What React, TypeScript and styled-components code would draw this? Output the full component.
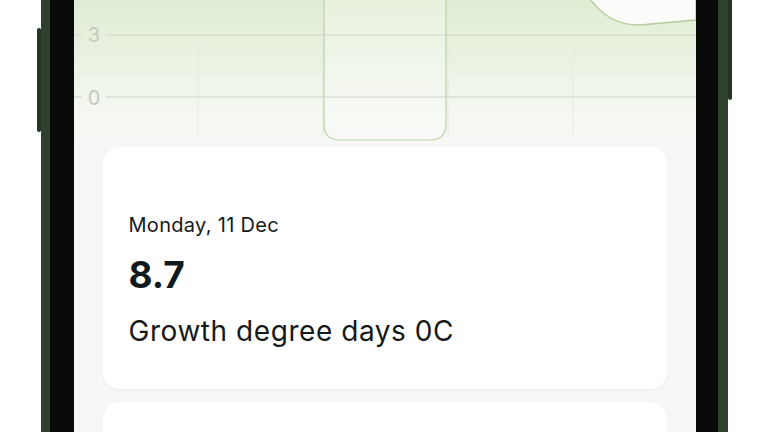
import * as React from "react";
import styled, { createGlobalStyle } from "styled-components";

const GlobalStyle = createGlobalStyle`
  html, body {
    margin: 0;
    padding: 0;
    background: #ffffff;
  }
  body {
    font-family: Inter, "Noto Sans", "Liberation Sans", sans-serif;
  }
`;

const Viewport = styled.div`
  width: 768px;
  height: 432px;
  overflow: hidden;
  display: flex;
  justify-content: center;
  background: #ffffff;
`;

const Phone = styled.div`
  position: relative;
  width: 687px;
  height: 432px;
  box-sizing: border-box;
  border-left: 9px solid #2e412d;
  border-right: 10px solid #2e412d;
  box-shadow: inset 1px 0 0 #3d543a, inset -1px 0 0 #3d543a;
`;

const SideButton = styled.div<{ $side: "left" | "right"; $top: number; $height: number }>`
  position: absolute;
  top: ${(p) => p.$top}px;
  height: ${(p) => p.$height}px;
  width: 4px;
  ${(p) => (p.$side === "left" ? "left: -13px;" : "right: -14px;")}
  background: #253622;
  border-radius: 2px;
`;

const Bezel = styled.div`
  height: 100%;
  box-sizing: border-box;
  border-left: 24px solid #0a0a0a;
  border-right: 22px solid #0a0a0a;
`;

const Screen = styled.div`
  height: 100%;
  background: #f7f7f5;
  display: flex;
  flex-direction: column;
  overflow: hidden;
`;

const Chart = styled.div`
  height: 145px;
  flex-shrink: 0;
  background: linear-gradient(180deg, #e0edd3 0%, #ebf3e4 45%, #f5f8f2 80%, #f7f7f5 100%);
  svg {
    display: block;
  }
`;

const CardList = styled.div`
  display: flex;
  flex-direction: column;
  gap: 13px;
  padding: 2px 29px 0 29px;
`;

const Card = styled.div<{ $tall?: boolean }>`
  background: #ffffff;
  border-radius: 16px;
  box-shadow: 0 1px 3px rgba(0, 0, 0, 0.05);
  padding: 66px 26px 41px;
  display: flex;
  flex-direction: column;
  min-height: ${(p) => (p.$tall ? "200px" : "0")};
`;

const DateLabel = styled.div`
  font-size: 20px;
  line-height: 24px;
  letter-spacing: 0.3px;
  color: #16191a;
`;

const Value = styled.div`
  margin-top: 15px;
  font-size: 37px;
  line-height: 46px;
  font-weight: 700;
  color: #0e1a1c;
`;

const Metric = styled.div`
  margin-top: 16px;
  font-size: 28px;
  line-height: 34px;
  letter-spacing: 0.55px;
  color: #16191a;
`;

function ChartArt() {
  const gridColor = "#cfd4ca";
  return (
    <svg width="622" height="145" viewBox="0 0 622 145">
      {[124, 249, 374, 499].map((x) => (
        <line key={x} x1={x} y1={0} x2={x} y2={135} stroke="#e3ecdb" strokeWidth="1" />
      ))}
      <path
        d="M250 -20 L250 124 Q250 140 266 140 L356 140 Q372 140 372 124 L372 -20"
        fill="rgba(255,255,255,0.25)"
        stroke="#bcd3a5"
        strokeWidth="1.2"
      />
      {[35, 97].map((y) => (
        <g key={y}>
          <line x1={0} y1={y} x2={8} y2={y} stroke={gridColor} strokeWidth="1" />
          <line x1={32} y1={y} x2={622} y2={y} stroke={gridColor} strokeWidth="1" />
        </g>
      ))}
      <text x="20" y="42" textAnchor="middle" fontSize="20" fill="#c6c9c3" fontFamily="Inter, sans-serif">
        3
      </text>
      <text x="20" y="105" textAnchor="middle" fontSize="20" fill="#c6c9c3" fontFamily="Inter, sans-serif">
        0
      </text>
      <path
        d="M515 -2 C528 14, 540 25, 566 25 L622 20 L622 -2 Z"
        fill="#fbfcf9"
        stroke="#b2cc97"
        strokeWidth="1.3"
      />
    </svg>
  );
}

export default function App() {
  return (
    <>
      <GlobalStyle />
      <Viewport>
        <Phone>
          <SideButton $side="left" $top={28} $height={104} />
          <SideButton $side="right" $top={-10} $height={110} />
          <Bezel>
            <Screen>
              <Chart>
                <ChartArt />
              </Chart>
              <CardList>
                <Card>
                  <DateLabel>Monday, 11 Dec</DateLabel>
                  <Value>8.7</Value>
                  <Metric>Growth degree days 0C</Metric>
                </Card>
                <Card $tall />
              </CardList>
            </Screen>
          </Bezel>
        </Phone>
      </Viewport>
    </>
  );
}
